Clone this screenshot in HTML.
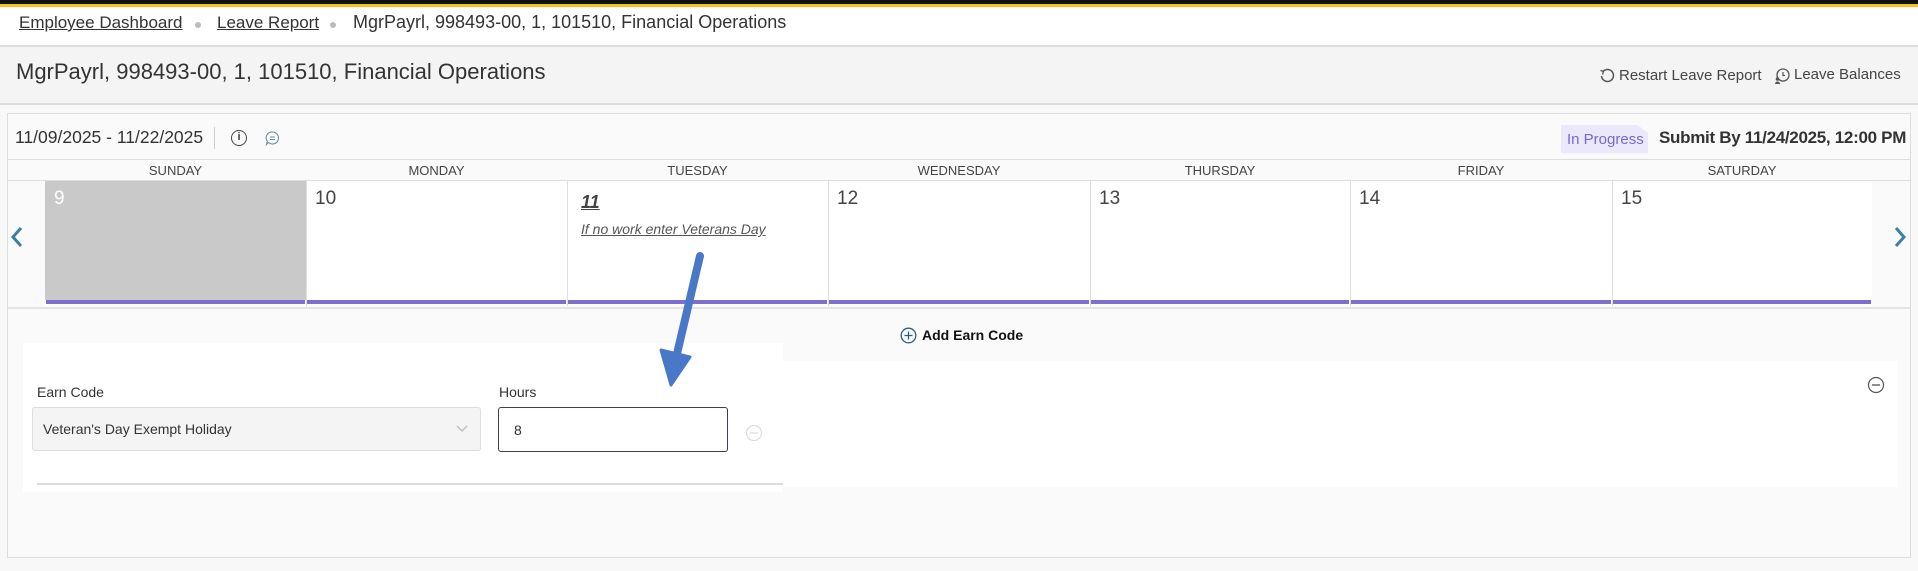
<!DOCTYPE html>
<html><head><style>
*{margin:0;padding:0;box-sizing:border-box}
body{width:1918px;height:571px;background:#f8f8f8;font-family:"Liberation Sans",sans-serif;color:#333;position:relative;overflow:hidden}
.a{position:absolute}
.t{white-space:nowrap}
</style></head><body>
<div class="a" style="left:0;top:0;width:1918px;height:4px;background:#111"></div>
<div class="a" style="left:0;top:4px;width:1918px;height:3px;background:#f5c518"></div>
<div class="a" style="left:0;top:7px;width:1918px;height:38px;background:#fff"></div>
<div class="a t" style="left:19px;top:13px;font-size:17px;color:#333"><u>Employee Dashboard</u></div>
<div class="a" style="left:195px;top:22px;width:6px;height:6px;border-radius:3px;background:#bbb"></div>
<div class="a t" style="left:217px;top:13px;font-size:17px;color:#333"><u>Leave Report</u></div>
<div class="a" style="left:330px;top:22px;width:6px;height:6px;border-radius:3px;background:#bbb"></div>
<div class="a t" style="left:353px;top:12px;font-size:18px;color:#333">MgrPayrl, 998493-00, 1, 101510, Financial Operations</div>
<div class="a" style="left:0;top:45px;width:1918px;height:2px;background:#ddd"></div>
<div class="a" style="left:0;top:47px;width:1918px;height:57px;background:#f4f4f4"></div>
<div class="a t" style="left:16px;top:59px;font-size:22px;color:#333">MgrPayrl, 998493-00, 1, 101510, Financial Operations</div>
<svg class="a" style="left:1599px;top:68px" width="16" height="16" viewBox="0 0 16 16"><path d="M4 3.5A6 6 0 1 1 2.5 8" fill="none" stroke="#555" stroke-width="1.5"/><path d="M1.5 2.5L4.5 3.5 3.5 6.5" fill="none" stroke="#555" stroke-width="1.3"/></svg>
<div class="a t" style="left:1619px;top:67px;font-size:15px;color:#444">Restart Leave Report</div>
<svg class="a" style="left:1774px;top:67px" width="16" height="17" viewBox="0 0 16 17"><circle cx="9" cy="8" r="6" fill="none" stroke="#555" stroke-width="1.3"/><path d="M9 5v3.5h2" fill="none" stroke="#555" stroke-width="1.2"/><circle cx="3.5" cy="12" r="1.8" fill="#555"/><path d="M1 17a2.5 2.5 0 0 1 5 0z" fill="#555"/></svg>
<div class="a t" style="left:1794px;top:66px;font-size:15px;color:#444">Leave Balances</div>
<div class="a" style="left:0;top:103px;width:1918px;height:2px;background:#ddd"></div>
<div class="a" style="left:7px;top:113px;width:1904px;height:445px;background:#fafafa;border:1px solid #ddd"></div>
<div class="a t" style="left:15px;top:127px;font-size:17.5px;color:#333">11/09/2025 - 11/22/2025</div>
<div class="a" style="left:214px;top:127px;width:1px;height:22px;background:#ccc"></div>
<div class="a" style="left:231px;top:130px;width:16px;height:16px;border:1.5px solid #444;border-radius:50%;font-size:11px;font-weight:bold;text-align:center;line-height:13px;color:#444">i</div>
<svg class="a" style="left:265px;top:131px" width="15" height="15" viewBox="0 0 15 15"><path d="M7.5 1a6 6 0 1 1-4 10.5L1.5 13.5l.8-3A6 6 0 0 1 7.5 1z" fill="none" stroke="#6a8fa8" stroke-width="1.1"/><path d="M5 6h5M5 8.5h5" stroke="#6a8fa8" stroke-width="1"/></svg>
<div class="a" style="left:1561px;top:125px;width:87px;height:28px;background:#ebe8fc;clip-path:polygon(0 0,88% 0,100% 28%,100% 100%,0 100%)"></div>
<div class="a t" style="left:1567px;top:131px;font-size:15px;color:#7a68c8">In Progress</div>
<div class="a t" style="left:1659px;top:128px;font-size:17px;color:#333;font-weight:bold;letter-spacing:-.3px">Submit By 11/24/2025, 12:00 PM</div>
<div class="a" style="left:8px;top:159px;width:1902px;height:1px;background:#ddd"></div>
<div class="a" style="left:8px;top:180px;width:1902px;height:1px;background:#ddd"></div>
<div class="a" style="left:45px;top:181px;width:1827px;height:125px;background:#fff"></div>
<div class="a" style="left:45px;top:181px;width:261px;height:119px;background:#c9c9c9"></div>
<div id="cols"></div>
<div class="a" style="left:8px;top:307px;width:1902px;height:2px;background:#e4e4e4"></div>
<svg class="a" style="left:10px;top:226px" width="14" height="22" viewBox="0 0 14 22"><path d="M11 2L3 11l8 9" fill="none" stroke="#3d7ea6" stroke-width="3"/></svg>
<svg class="a" style="left:1893px;top:226px" width="14" height="22" viewBox="0 0 14 22"><path d="M3 2l8 9-8 9" fill="none" stroke="#3d7ea6" stroke-width="3"/></svg>
<div class="a t" style="left:581px;top:192px;font-size:18px;color:#444;font-style:italic;font-weight:bold;text-decoration:underline">11</div>
<div class="a t" style="left:581px;top:221px;font-size:14px;color:#555;font-style:italic;text-decoration:underline">If no work enter Veterans Day</div>
<svg class="a" style="left:900px;top:327px" width="17" height="17" viewBox="0 0 17 17"><circle cx="8.5" cy="8.5" r="7.3" fill="none" stroke="#2d5e85" stroke-width="1.3"/><path d="M8.5 4.5v8M4.5 8.5h8" stroke="#2d5e85" stroke-width="1.3"/></svg>
<div class="a t" style="left:922px;top:327px;font-size:14px;font-weight:bold;color:#111">Add Earn Code</div>
<div class="a" style="left:783px;top:361px;width:1115px;height:126px;background:#fff"></div>
<div class="a" style="left:23px;top:343px;width:760px;height:149px;background:#fff"></div>
<svg class="a" style="left:1867px;top:376px" width="18" height="18" viewBox="0 0 18 18"><circle cx="9" cy="9" r="7.5" fill="none" stroke="#555" stroke-width="1.2"/><path d="M5 9h8" stroke="#555" stroke-width="1.3"/></svg>
<div class="a t" style="left:37px;top:384px;font-size:14px;color:#333">Earn Code</div>
<div class="a t" style="left:499px;top:384px;font-size:14px;color:#333">Hours</div>
<div class="a" style="left:32px;top:407px;width:449px;height:44px;background:#f4f4f4;border:1px solid #ddd;border-radius:3px"></div>
<div class="a t" style="left:43px;top:421px;font-size:14px;color:#333">Veteran's Day Exempt Holiday</div>
<svg class="a" style="left:456px;top:425px" width="12" height="8" viewBox="0 0 12 8"><path d="M1 1l5 5 5-5" fill="none" stroke="#bbb" stroke-width="1.3"/></svg>
<div class="a" style="left:498px;top:407px;width:230px;height:45px;background:#fff;border:1px solid #3a4050;border-radius:3px"></div>
<div class="a t" style="left:514px;top:422px;font-size:14px;color:#333">8</div>
<svg class="a" style="left:745px;top:424px" width="18" height="18" viewBox="0 0 18 18"><circle cx="9" cy="9" r="7.5" fill="none" stroke="#ddd" stroke-width="1.2"/><path d="M5 9h8" stroke="#ddd" stroke-width="1.3"/></svg>
<div class="a" style="left:37px;top:483px;width:746px;height:2px;background:#ddd"></div>
<svg class="a" style="left:0;top:0" width="1918" height="571"><path d="M700 256L676 358" stroke="#4a78c9" stroke-width="8" stroke-linecap="round"/><path d="M661 350L671 385 690 357z" fill="#4a78c9" stroke="#4a78c9" stroke-width="3" stroke-linejoin="round"/></svg>
<script>
var b=[45,306,567,828,1090,1350,1612,1872],n=["SUNDAY","MONDAY","TUESDAY","WEDNESDAY","THURSDAY","FRIDAY","SATURDAY"],h="";
for(var i=0;i<7;i++){var l=b[i],w=b[i+1]-b[i];
h+='<div class="a t" style="left:'+l+'px;top:163px;width:'+w+'px;text-align:center;font-size:13px;color:#444">'+n[i]+'</div>';
if(i>0)h+='<div class="a" style="left:'+l+'px;top:181px;width:1px;height:125px;background:#ddd"></div>';
h+='<div class="a" style="left:'+(l+1)+'px;top:300px;width:'+(w-2)+'px;height:4px;background:#7d70cc"></div>';
if(i!=2)h+='<div class="a t" style="left:'+(l+9)+'px;top:188px;font-size:19px;color:'+(i==0?'#fff':'#444')+'">'+(9+i)+'</div>';}
document.getElementById('cols').innerHTML=h;
</script>
</body></html>
